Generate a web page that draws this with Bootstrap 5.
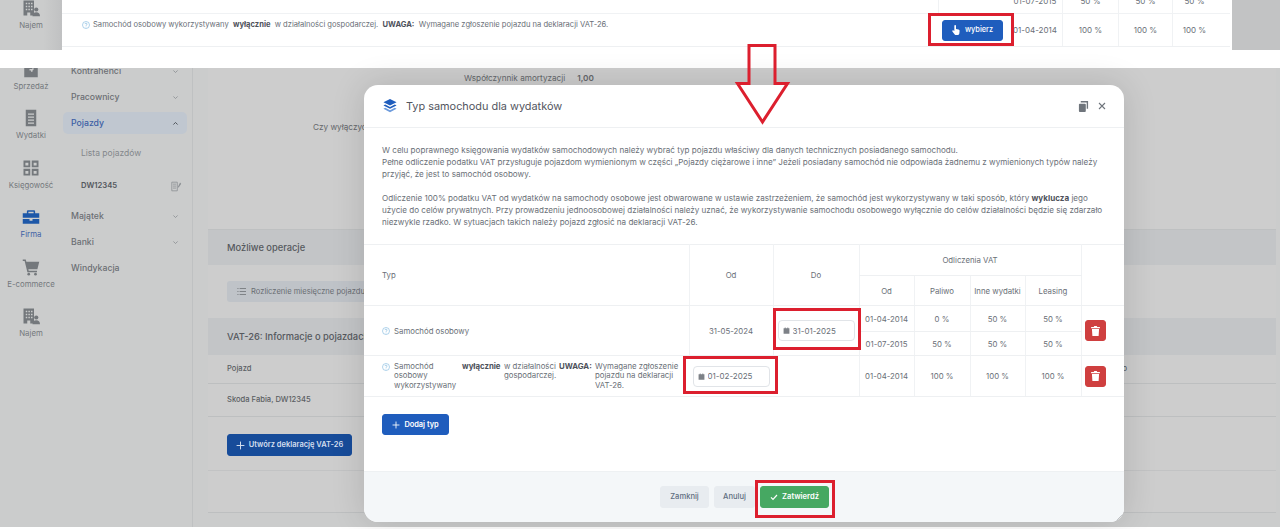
<!DOCTYPE html>
<html lang="pl">
<head>
<meta charset="utf-8">
<title>Typ samochodu dla wydatków</title>
<link rel="stylesheet" href="https://cdn.jsdelivr.net/npm/bootstrap@5.3.0/dist/css/bootstrap.min.css">
<style>
html,body{height:529px;overflow:hidden;background:#fff;}
body{font-family:Inter,"Liberation Sans",sans-serif;font-size:8.1px;line-height:12px;color:#6a6f77;}
.sheet{position:relative;width:1280px;height:529px;}
.top-shot{height:50px;display:flex;overflow:hidden;}
.low-shot{height:459px;margin-top:18px;display:flex;overflow:hidden;background:#cbcccc;}
.rail{width:62px;flex:none;background:linear-gradient(90deg,#cbcccc 0,#cbcccc 70%,#c0c1c2 100%);color:#74787c;}
.low-shot .rail{background:#cbcccc;margin-top:0;}
.rail-in{margin-top:-11px;}
.top-shot .rail-in{margin-top:-4px;}
.rail-item{height:49.4px;padding-top:3px;text-align:center;font-size:7.8px;}
.rail-item svg{display:block;margin:0 auto 2px;width:18px;height:18px;}
.rail-item.on{color:#3d5fa5;}
.rail-item.on svg{color:#1d57a8;}
.top-panel{width:1170px;flex:none;background:#fff;}
.top-gut{flex:1;background:#c2c3c4;}
.t-row1{height:14px;width:1168px;display:flex;overflow:hidden;border-bottom:1px solid #f0f2f4;}
.t-row2{height:33px;display:flex;align-items:stretch;border-bottom:1px solid #eef0f2;width:1168px;}
.t-desc{flex:1;display:flex;align-items:flex-start;padding:5px 0 0 20px;gap:3px;white-space:pre;font-size:7.6px;}
.t-desc .q{margin-top:2px;}
.t-desc b{color:#4d515a;font-weight:700;}
.t-btn{width:80px;flex:none;display:flex;align-items:center;padding-left:14px;}
.t-gap{width:70px;flex:none;border-left:1px solid #f0f2f4;}
.t-c{flex:none;display:flex;align-items:center;justify-content:center;font-size:8px;}
.w-d{width:54px;}.w-a{width:56px;border-left:1px solid #f0f2f4;}.w-b{width:54px;border-left:1px solid #f0f2f4;}.w-e{width:58px;border-left:1px solid #f0f2f4;padding-right:14px;}
.t-row1 .t-c,.t-row1 .t-gap{height:24px;margin-top:-11px;}
.sub{width:131px;flex:none;background:#cbcccc;border-right:1px solid #bfc1c2;color:#6b6f74;font-size:8.7px;font-weight:500;}
.sub-in{margin-top:-10px;padding:0 5px 0 1px;}
.sub-item{height:26px;display:flex;align-items:center;justify-content:space-between;padding:0 8px;}
.sub-item svg{width:7px;height:7px;color:#8b8f93;}
.sub-on{height:22px;margin:2px 0;background:#c0c7d0;border-radius:5px;color:#3d5fa5;}
.sub-on svg{color:#4d5258;}
.sub-leaf{padding-left:18px;font-size:8.5px;font-weight:400;color:#83878b;margin-top:6px;}
.sub-bold{padding-left:18px;font-size:7.7px;font-weight:600;color:#54585e;margin-top:7px;margin-bottom:4px;}
.sub-bold svg{width:11px;height:11px;margin-right:-3px;}
.main{flex:1;padding:0 4px 0 15px;min-width:0;}
.pane{background:#cdcdcd;}
.pane-top{height:161px;padding-top:4px;font-size:8.2px;color:#64676b;}
.kv{display:flex;height:12px;margin-left:256px;gap:12px;white-space:nowrap;}
.kv b{font-weight:600;}
.kv2{margin-left:105px;margin-top:37px;}
.band{background:#c3c5c7;border-top:1px solid #bec0c1;display:flex;align-items:center;padding-left:19px;font-size:9.3px;font-weight:500;color:#55585d;}
.band-a{height:36px;}.band-b{height:37px;border-top:0;}
.pane-ops{height:53px;padding:16px 0 0 19px;}
.ops-btn{height:21px;padding:0 10px;background:#bfc3c8;border:0;border-radius:3px;font-size:7.6px;color:#696d72;--bs-btn-hover-bg:#bfc3c8;display:inline-flex;align-items:center;gap:5px;white-space:nowrap;}
.ops-btn svg{width:9px;height:9px;}
.v-row{display:flex;justify-content:space-between;align-items:center;padding-left:19px;border-bottom:1px solid #bdbfc0;font-size:7.6px;font-weight:500;color:#5b5e63;}
.v-1{height:29px;}.v-2{height:33px;}
.peek{width:159px;}
.v-3{height:54px;border-bottom:1px solid #c2c3c4;padding-left:19px;padding-top:17px;}
.v-4{height:42px;border-bottom:1px solid #bdbfc0;}
.blue-btn{--bs-btn-bg:#1f5dbd;--bs-btn-border-color:#1f5dbd;--bs-btn-hover-bg:#1f5dbd;--bs-btn-hover-border-color:#1f5dbd;--bs-btn-color:#fff;--bs-btn-hover-color:#fff;--bs-btn-padding-x:0;--bs-btn-padding-y:0;--bs-btn-font-size:7.4px;--bs-btn-font-weight:600;--bs-btn-border-radius:3px;display:inline-flex;align-items:center;justify-content:center;gap:4px;white-space:nowrap;}
.dim-blue{--bs-btn-bg:#174c9a;--bs-btn-border-color:#174c9a;--bs-btn-hover-bg:#174c9a;--bs-btn-hover-border-color:#174c9a;--bs-btn-color:#d5dfee;--bs-btn-hover-color:#d5dfee;--bs-btn-font-size:7.5px;width:125px;height:22px;}
.b-pick{width:61px;height:21px;--bs-btn-font-weight:500;gap:5px;}
.b-add{width:67px;height:21px;}
.dlg{position:absolute;left:364px;top:85px;width:760px;height:437px;}
.dlg .modal-content{height:437px;background:#fff;border:0;border-radius:14px;box-shadow:0 0 34px rgba(0,0,0,.14);overflow:hidden;}
.dlg .modal-header{height:43px;flex:none;padding:0 18px 0 19px;border-bottom:1px solid #eef0f2;gap:9px;}
.dlg-title{font-size:10.9px;font-weight:400;color:#52555e;margin:0;line-height:14px;}
.dlg .modal-body{padding:0;flex:1;}
.intro{height:116px;padding:16px 18px 0;font-size:8.1px;}
.intro b{font-weight:700;color:#4d515a;}
.vat{table-layout:fixed;width:760px;margin:0;border-top:1px solid #eef0f2;--bs-table-color:#6a6f77;--bs-table-bg:transparent;font-size:7.8px;}
.vat td,.vat th{padding:0;border-bottom:1px solid #eef0f2;vertical-align:middle;text-align:center;font-weight:400;}
.vat .lft{text-align:left;padding-left:18px;}
.vat .vl{border-left:1px solid #f0f2f4;}
.vat .act{text-align:left;padding-left:3px;}
.r-a{height:31px;}.r-b{height:30px;}.r-c{height:26px;}.r-d{height:24px;}.r-e{height:41px;}
.q{width:8px;height:8px;flex:none;color:#7cb6dd;}
.typ-row{display:flex;align-items:center;gap:4px;}
.typ-cols{display:flex;align-items:flex-start;padding-right:4px;line-height:9.6px;text-align:left;}
.typ-cols .q{margin-top:1px;margin-right:4px;}
.c-a{width:68px;}.c-b{width:42px;font-weight:700;color:#4d515a;}.c-c{width:55px;}.c-d{width:36px;font-weight:700;color:#4d515a;}.c-e{width:90px;}
.date-box{position:relative;width:77px;height:21px;margin:0 auto;}
.date-box .form-control{height:21px;min-height:0;padding:0 0 0 14px;font-size:8px;color:#6a6f77;border-color:#e1e4e8;border-radius:4px;}
.date-box svg{position:absolute;left:5px;top:7px;width:7px;height:7px;color:#7d8187;}
.del-btn{--bs-btn-bg:#cf3f3f;--bs-btn-border-color:#cf3f3f;--bs-btn-hover-bg:#cf3f3f;--bs-btn-hover-border-color:#cf3f3f;--bs-btn-padding-x:0;--bs-btn-padding-y:0;--bs-btn-border-radius:3px;width:21px;height:21px;display:inline-flex;align-items:center;justify-content:center;}
.del-btn svg{width:9px;height:10px;color:#fff;}
.add-wrap{padding:17px 18px 0;}
.dlg .modal-footer{height:51px;flex:none;padding:0 0 0 296px;justify-content:flex-start;background:#f4f7f9;border-top:1px solid #eef1f3;gap:5px;flex-wrap:nowrap;}
.dlg .modal-footer>*{margin:0;}
.soft-btn{--bs-btn-bg:#e8ecf0;--bs-btn-border-color:#e8ecf0;--bs-btn-hover-bg:#e8ecf0;--bs-btn-hover-border-color:#e8ecf0;--bs-btn-color:#5f6e80;--bs-btn-hover-color:#5f6e80;--bs-btn-padding-x:0;--bs-btn-padding-y:0;--bs-btn-font-size:7.6px;--bs-btn-font-weight:500;--bs-btn-border-radius:3px;height:22px;}
.b-close{width:49px;}.b-cancel{width:41px;}
.ok-btn{--bs-btn-bg:#46a862;--bs-btn-border-color:#46a862;--bs-btn-hover-bg:#46a862;--bs-btn-hover-border-color:#46a862;--bs-btn-color:#fff;--bs-btn-hover-color:#fff;--bs-btn-padding-x:0;--bs-btn-padding-y:0;--bs-btn-font-size:7.6px;--bs-btn-font-weight:600;--bs-btn-border-radius:3px;width:69px;height:22px;display:inline-flex;align-items:center;justify-content:center;gap:4px;}
.ico-w{color:#fff;}
.grip{position:absolute;right:1px;bottom:1px;width:8px;height:8px;color:#a5a9ad;}
.mark-box{position:absolute;border:3px solid #dc1f2e;}
.m1{left:928px;top:13px;width:86px;height:33px;}
.m2{left:773px;top:308px;width:88px;height:42px;}
.m3{left:683px;top:356px;width:95px;height:38px;}
.m4{left:755px;top:480px;width:80px;height:38px;}
.arrow-mark{position:absolute;left:730px;top:40px;width:66px;height:90px;}
</style>
</head>
<body>
<svg width="0" height="0" class="d-none" aria-hidden="true">
  <symbol id="i-rent" viewBox="0 0 24 24"><path fill="currentColor" fill-rule="evenodd" d="M2 2h14v20h-5v-4H7v4H2zM5 5v2h2V5zm3.500 0v2h2V5zM12 5v2h2V5zM5 9v2h2V9zm3.500 0v2h2V9zM12 9v2h2V9zM5 13v2h2v-2zm3.500 0v2h2v-2zM12 13v2h2v-2z"/><circle cx="19" cy="14" r="2.800" fill="currentColor"/><path fill="currentColor" d="M14 23c0-3.500 2-5.500 5-5.500s5 2 5 5.500z"/></symbol>
  <symbol id="i-sale" viewBox="0 0 24 24"><path fill="currentColor" fill-rule="evenodd" d="M3 1h18v22H3zM10 8h5V6.500h-2V5h-2v1.500c-2 .3-2 3.500 0 3.800l3 .6v1h-4V14h2v1.500h2V14c2-.3 2-3.500 0-3.800l-3-.6z"/></symbol>
  <symbol id="i-doc" viewBox="0 0 24 24"><path fill="currentColor" fill-rule="evenodd" d="M5 1h14v22H5zM8 6v1.500h8V6zm0 4v1.500h8V10zm0 4v1.500h8V14zm0 4v1.500h8V18z"/></symbol>
  <symbol id="i-grid" viewBox="0 0 24 24"><path fill="currentColor" fill-rule="evenodd" d="M2 2h9v9H2zm2.500 3v3.500h4V5zM13 2h9v9h-9zm2.500 3v3.500h4V5zM2 13h9v9H2zm2.500 3v3.500h4V16zM13 13h9v9h-9zm2.500 3v3.500h4V16z"/></symbol>
  <symbol id="i-case" viewBox="0 0 24 24"><path fill="currentColor" fill-rule="evenodd" d="M8 3h8a1.500 1.500 0 0 1 1.500 1.500V7H23v6H1V7h5.500V4.500A1.500 1.500 0 0 1 8 3zm.5 2v2h7V5zM1 14.500h9V17h4v-2.500h9V21H1z"/></symbol>
  <symbol id="i-cart" viewBox="0 0 24 24"><path fill="currentColor" d="M1 2h4l.8 3H23l-2.500 10H8.500l.4 2H20v2H7.200L3.500 4H1z"/><circle cx="9" cy="21.500" r="1.800" fill="currentColor"/><circle cx="18" cy="21.500" r="1.800" fill="currentColor"/></symbol>
  <symbol id="i-down" viewBox="0 0 10 10"><path fill="none" stroke="currentColor" stroke-width="1.200" d="M2 3.500 5 6.500 8 3.500"/></symbol>
  <symbol id="i-up" viewBox="0 0 10 10"><path fill="none" stroke="currentColor" stroke-width="1.400" d="M2 6.500 5 3.500 8 6.500"/></symbol>
  <symbol id="i-q" viewBox="0 0 16 16"><circle cx="8" cy="8" r="7" fill="none" stroke="currentColor" stroke-width="1.200"/><path fill="none" stroke="currentColor" stroke-width="1.300" d="M5.800 6.200C5.800 3.800 10.200 3.800 10.200 6.200c0 1.700-2.200 1.700-2.200 3.500"/><circle cx="8" cy="11.800" r=".9" fill="currentColor"/></symbol>
  <symbol id="i-cal" viewBox="0 0 12 12"><path fill="currentColor" d="M1 2h2V.800h1.500V2h3V.800H9V2h2v9.500H1z"/></symbol>
  <symbol id="i-trash" viewBox="0 0 14 16"><path fill="currentColor" d="M5 0h4l.8 1.500H14v2H0v-2h4.200zM1.300 4.800h11.400L12 16H2z"/></symbol>
  <symbol id="i-plus" viewBox="0 0 12 12"><path fill="none" stroke="currentColor" stroke-width="1.300" d="M6 .8v10.400M.8 6h10.400"/></symbol>
  <symbol id="i-check" viewBox="0 0 12 12"><path fill="none" stroke="currentColor" stroke-width="1.800" d="M1.500 6.500 4.500 9.500 10.500 3"/></symbol>
  <symbol id="i-hand" viewBox="0 0 14 18"><path fill="currentColor" d="M4 1.500a1.500 1.500 0 0 1 3 0V7l4.500 1c1.200.3 2 1.200 2 2.500L13 15.500A2.500 2.500 0 0 1 10.500 18H7a3 3 0 0 1-2.300-1.100L.5 11.500c-.9-1.300.8-2.800 2-1.700L4 11z"/></symbol>
  <symbol id="i-list" viewBox="0 0 12 12"><path fill="none" stroke="currentColor" stroke-width="1" d="M.5 2h1.500M3.500 2H12M.5 6h1.500M3.500 6H12M.5 10h1.500M3.500 10H12"/></symbol>
  <symbol id="i-car-note" viewBox="0 0 14 14"><path fill="none" stroke="currentColor" stroke-width="1" d="M1 1.500h7v11H1zM2.500 4h4M2.500 6.500h4M2.500 9h4"/><path fill="currentColor" d="M11.500 2 13 3.500 10 8 8.500 8.500 9 7z"/></symbol>
</svg>

<div class="sheet">
  <div class="top-shot">
    <div class="rail">
      <div class="rail-in"><div class="rail-item"><svg><use href="#i-rent"/></svg>Najem</div></div>
    </div>
    <div class="top-panel">
      <div class="t-row1">
        <div class="flex-grow-1"></div>
        <div class="t-gap"></div>
        <div class="t-c w-d">01-07-2015</div><div class="t-c w-a">50 %</div><div class="t-c w-b">50 %</div><div class="t-c w-e">50 %</div>
      </div>
      <div class="t-row2">
        <div class="t-desc"><svg class="q"><use href="#i-q"/></svg><span>Samochód osobowy wykorzystywany  <b>wyłącznie</b>  w działalności gospodarczej.  <b>UWAGA:</b>  Wymagane zgłoszenie pojazdu na deklaracji VAT-26.</span></div>
        <div class="t-btn"><button type="button" class="btn blue-btn b-pick"><svg width="8" height="10" class="ico-w"><use href="#i-hand"/></svg>wybierz</button></div>
        <div class="t-c w-d">01-04-2014</div><div class="t-c w-a">100 %</div><div class="t-c w-b">100 %</div><div class="t-c w-e">100 %</div>
      </div>
    </div>
    <div class="top-gut"></div>
  </div>

  <div class="low-shot">
    <div class="rail">
      <div class="rail-in">
        <div class="rail-item"><svg><use href="#i-sale"/></svg>Sprzedaż</div>
        <div class="rail-item"><svg><use href="#i-doc"/></svg>Wydatki</div>
        <div class="rail-item"><svg><use href="#i-grid"/></svg>Księgowość</div>
        <div class="rail-item on"><svg><use href="#i-case"/></svg>Firma</div>
        <div class="rail-item"><svg><use href="#i-cart"/></svg>E-commerce</div>
        <div class="rail-item"><svg><use href="#i-rent"/></svg>Najem</div>
      </div>
    </div>
    <nav class="sub">
      <div class="sub-in">
        <div class="sub-item">Kontrahenci<svg><use href="#i-down"/></svg></div>
        <div class="sub-item">Pracownicy<svg><use href="#i-down"/></svg></div>
        <div class="sub-item sub-on">Pojazdy<svg><use href="#i-up"/></svg></div>
        <div class="sub-item sub-leaf">Lista pojazdów</div>
        <div class="sub-item sub-bold">DW12345<svg><use href="#i-car-note"/></svg></div>
        <div class="sub-item">Majątek<svg><use href="#i-down"/></svg></div>
        <div class="sub-item">Banki<svg><use href="#i-down"/></svg></div>
        <div class="sub-item">Windykacja</div>
      </div>
    </nav>
    <main class="main">
      <div class="pane pane-top">
        <div class="kv"><span>Współczynnik amortyzacji</span><b>1,00</b></div>
        <div class="kv kv2"><span>Czy wyłączyć</span></div>
      </div>
      <div class="band band-a">Możliwe operacje</div>
      <div class="pane pane-ops"><button type="button" class="btn ops-btn"><svg><use href="#i-list"/></svg>Rozliczenie miesięczne pojazdu</button></div>
      <div class="band band-b">VAT-26: Informacje o pojazdach</div>
      <div class="pane">
        <div class="v-row v-1"><span>Pojazd</span><span class="peek">Do</span></div>
        <div class="v-row v-2"><span>Skoda Fabia, DW12345</span></div>
        <div class="v-3"><button type="button" class="btn blue-btn dim-blue"><svg width="9" height="9"><use href="#i-plus"/></svg>Utwórz deklarację VAT-26</button></div>
        <div class="v-4"></div>
      </div>
    </main>
  </div>

  <div class="dlg">
    <div class="modal-content">
      <div class="modal-header">
        <svg width="14" height="14" viewBox="0 0 16 16"><path fill="#1f5dbd" d="M8 0 15.500 3.600 8 7.400.5 3.600z"/><path fill="#1f5dbd" d="M2.500 6.300 8 9l5.500-2.700 2 1.100L8 11.200.5 7.400z"/><path fill="#6d9bdc" d="M2.500 10 8 12.800l5.500-2.800 2 1.100L8 15 .5 11.100z"/></svg>
        <h5 class="dlg-title flex-grow-1">Typ samochodu dla wydatków</h5>
        <svg width="11" height="11" viewBox="0 0 12 12"><path fill="#6f757c" d="M3 0h8v8.500H9.500V1.500H3z"/><rect x="1" y="3" width="7.500" height="9" rx="1" fill="#6f757c"/></svg>
        <svg width="8" height="8" viewBox="0 0 8 8"><path stroke="#6f757c" stroke-width="1.100" d="M1 1l6 6M7 1 1 7"/></svg>
      </div>
      <div class="modal-body">
        <div class="intro">W celu poprawnego księgowania wydatków samochodowych należy wybrać typ pojazdu właściwy dla danych technicznych posiadanego samochodu.<br>Pełne odliczenie podatku VAT przysługuje pojazdom wymienionym w części „Pojazdy ciężarowe i inne” Jeżeli posiadany samochód nie odpowiada żadnemu z wymienionych typów należy przyjąć, że jest to samochód osobowy.<br><br>Odliczenie 100% podatku VAT od wydatków na samochody osobowe jest obwarowane w ustawie zastrzeżeniem, że samochód jest wykorzystywany w taki sposób, który <b>wyklucza</b> jego użycie do celów prywatnych. Przy prowadzeniu jednoosobowej działalności należy uznać, że wykorzystywanie samochodu osobowego wyłącznie do celów działalności będzie się zdarzało niezwykle rzadko. W sytuacjach takich należy pojazd zgłosić na deklaracji VAT-26.</div>
        <table class="table vat">
          <colgroup><col style="width:325px"><col style="width:84px"><col style="width:86px"><col style="width:55px"><col style="width:56px"><col style="width:55px"><col style="width:56px"><col style="width:43px"></colgroup>
          <thead>
            <tr class="r-a"><th rowspan="2" class="lft">Typ</th><th rowspan="2" class="vl">Od</th><th rowspan="2" class="vl">Do</th><th colspan="4" class="vl">Odliczenia VAT</th><th rowspan="2" class="vl"></th></tr>
            <tr class="r-b"><th class="vl">Od</th><th class="vl">Paliwo</th><th class="vl">Inne wydatki</th><th class="vl">Leasing</th></tr>
          </thead>
          <tbody>
            <tr class="r-c">
              <td rowspan="2" class="lft"><div class="typ-row"><svg class="q"><use href="#i-q"/></svg>Samochód osobowy</div></td>
              <td rowspan="2" class="vl">31-05-2024</td>
              <td rowspan="2" class="vl"><div class="date-box"><svg><use href="#i-cal"/></svg><input class="form-control" value="31-01-2025" aria-label="Do"></div></td>
              <td class="vl">01-04-2014</td><td class="vl">0 %</td><td class="vl">50 %</td><td class="vl">50 %</td>
              <td rowspan="2" class="vl act"><button type="button" class="btn del-btn" aria-label="Usuń"><svg><use href="#i-trash"/></svg></button></td>
            </tr>
            <tr class="r-d"><td class="vl">01-07-2015</td><td class="vl">50 %</td><td class="vl">50 %</td><td class="vl">50 %</td></tr>
            <tr class="r-e">
              <td class="lft"><div class="typ-cols"><svg class="q"><use href="#i-q"/></svg><span class="c-a">Samochód osobowy wykorzystywany</span><span class="c-b">wyłącznie</span><span class="c-c">w działalności gospodarczej.</span><span class="c-d">UWAGA:</span><span class="c-e">Wymagane zgłoszenie pojazdu na deklaracji VAT-26.</span></div></td>
              <td><div class="date-box"><svg><use href="#i-cal"/></svg><input class="form-control" value="01-02-2025" aria-label="Od"></div></td>
              <td></td>
              <td class="vl">01-04-2014</td><td class="vl">100 %</td><td class="vl">100 %</td><td class="vl">100 %</td>
              <td class="vl act"><button type="button" class="btn del-btn" aria-label="Usuń"><svg><use href="#i-trash"/></svg></button></td>
            </tr>
          </tbody>
        </table>
        <div class="add-wrap"><button type="button" class="btn blue-btn b-add"><svg width="8" height="8"><use href="#i-plus"/></svg>Dodaj typ</button></div>
      </div>
      <div class="modal-footer">
        <button type="button" class="btn soft-btn b-close">Zamknij</button>
        <button type="button" class="btn soft-btn b-cancel">Anuluj</button>
        <button type="button" class="btn ok-btn"><svg width="8" height="8"><use href="#i-check"/></svg>Zatwierdź</button>
      </div>
      <svg class="grip" viewBox="0 0 8 8"><path stroke="currentColor" stroke-width=".7" d="M8 1 1 8M8 3.500 3.500 8M8 6 6 8"/></svg>
    </div>
  </div>

  <div class="mark-box m1"></div>
  <div class="mark-box m2"></div>
  <div class="mark-box m3"></div>
  <div class="mark-box m4"></div>
  <svg class="arrow-mark" viewBox="0 0 66 90"><path fill="none" stroke="#dc1f2e" stroke-width="3" stroke-linejoin="miter" d="M19 5.500H45V43.500H57.500L32.500 82 7.500 43.500H19z"/></svg>
</div>
</body>
</html>
